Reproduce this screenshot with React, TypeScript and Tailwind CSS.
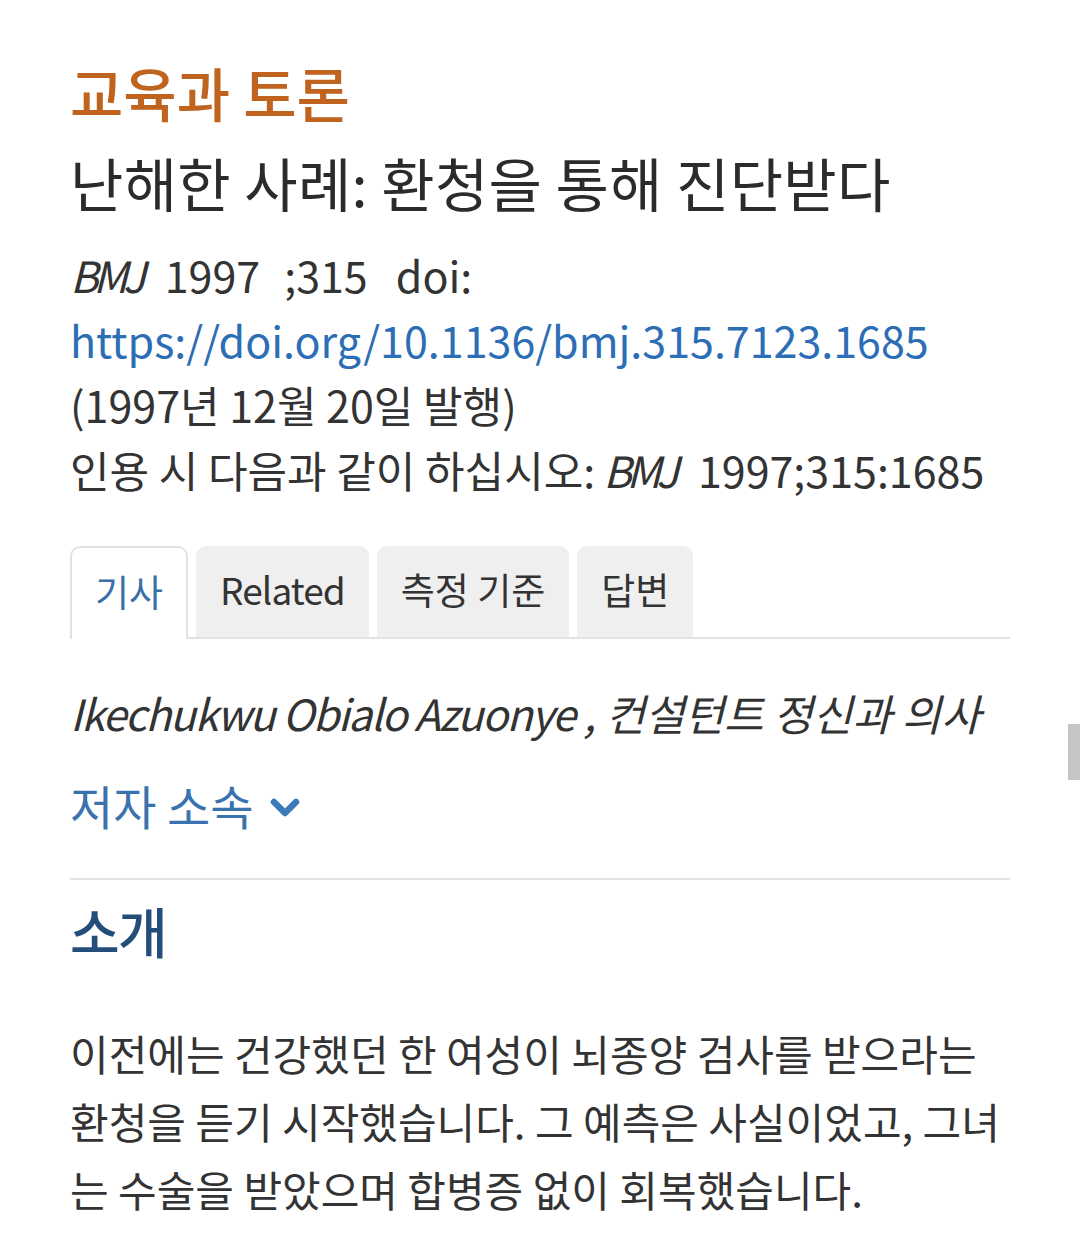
export default function App() {
  return (
    <div className="relative min-h-[1246px] overflow-hidden bg-white font-['Noto_Sans_CJK_KR','Noto_Sans',sans-serif] text-[#333333]">
      <div className="pl-[70px] pr-[70px] pt-[56px]">
        <div className="text-[58px] leading-[72px] font-medium text-[#c0631f]">교육과 토론</div>
        <h1 className="text-[58px] leading-[108px] font-normal tracking-[0.005em] text-[#2b2b2b]">
          난해한 사례: 환청을 통해 진단받다
        </h1>
        <div className="mt-[6px] whitespace-nowrap text-[43px] leading-[65px]">
          <div>
            <i className="tracking-[-0.12em]">BMJ</i>
            <span className="ml-[24px]">1997</span>
            <span className="ml-[24px]">;315</span>
            <span className="ml-[28px]">doi:</span>
          </div>
          <div>
            <a className="text-[#2c6eb5]">https://doi.org/10.1136/bmj.315.7123.1685</a>
          </div>
          <div>(1997년 12월 20일 발행)</div>
          <div>
            인용 시 다음과 같이 하십시오:
            <i className="ml-[8px] tracking-[-0.12em]">BMJ</i>
            <span className="ml-[24px]">1997;315:1685</span>
          </div>
        </div>

        <div className="mt-[44px] flex items-end gap-[8px] border-b-2 border-[#e2e2e2] text-[37px]">
          <div className="-mb-[2px] flex h-[93px] items-center rounded-t-[10px] border-2 border-b-0 border-[#e2e2e2] bg-white px-[23px] pb-[4px] text-[#3a6ea8]">
            기사
          </div>
          <div className="flex h-[91px] items-center rounded-t-[10px] bg-[#efefef] px-[24px] pb-[4px] tracking-[-0.025em] text-[#333333]">
            Related
          </div>
          <div className="flex h-[91px] items-center rounded-t-[10px] bg-[#efefef] px-[24px] pb-[4px] text-[#333333]">
            측정 기준
          </div>
          <div className="flex h-[91px] items-center rounded-t-[10px] bg-[#efefef] px-[24px] pb-[4px] text-[#333333]">
            답변
          </div>
        </div>

        <div className="mt-[43px] whitespace-nowrap text-[43px] leading-[60px] italic text-[#333333]">
          <span className="tracking-[-0.035em]">Ikechukwu Obialo Azuonye</span> , 컨설턴트 정신과 의사
        </div>

        <div className="mt-[33px] flex items-center gap-[15px] text-[47px] leading-[60px] text-[#3a72ad]">
          <span>저자 소속</span>
          <svg width="32" height="22" viewBox="0 0 32 22" className="mt-[6px]">
            <polyline
              points="5,5 16,16 27,5"
              fill="none"
              stroke="#3d7ab8"
              strokeWidth="6.5"
              strokeLinecap="round"
              strokeLinejoin="round"
            />
          </svg>
        </div>

        <div className="mt-[43px] h-[2px] bg-[#e2e2e2]" />

        <h2 className="mt-[16px] text-[54px] leading-[70px] font-medium tracking-[-0.03em] text-[#234e7a]">소개</h2>

        <p className="mt-[53px] text-[42px] leading-[68px] text-[#333333]">
          이전에는 건강했던 한 여성이 뇌종양 검사를 받으라는 환청을 듣기 시작했습니다. 그 예측은 사실이었고, 그녀는 수술을 받았으며 합병증 없이 회복했습니다.
        </p>
      </div>

      <div className="absolute right-0 top-[724px] h-[56px] w-[12px] bg-[#c6c6c6]" />
    </div>
  );
}
